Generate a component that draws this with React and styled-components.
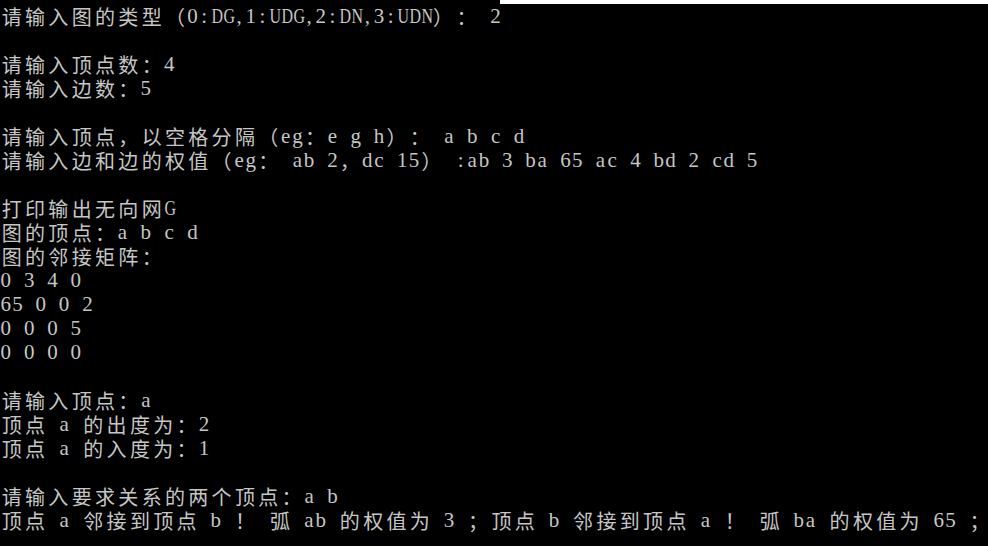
import React from "react";
import styled, { createGlobalStyle } from "styled-components";

const GlobalStyle = createGlobalStyle`
  html, body {
    margin: 0;
    padding: 0;
    background: #000;
  }
  body {
    width: 988px;
    height: 546px;
    overflow: hidden;
  }
`;

const Screen = styled.div`
  width: 988px;
  height: 546px;
  background: #000;
  color: #c6c6c6;
  display: flex;
  flex-direction: column;
`;

const TopStrip = styled.div`
  display: flex;
  height: 4px;
  margin-bottom: 1px;
`;

const StripGap = styled.div`
  width: 500px;
  background: #000;
`;

const StripWhite = styled.div`
  flex: 1;
  background: #fff;
`;

const Line = styled.div`
  display: flex;
  height: 24px;
  line-height: 23px;
  white-space: pre;
`;

// one console cell: CJK / fullwidth chars take two columns
const Cell = styled.span`
  display: inline-block;
  flex: none;
  width: ${(p) => (p.$wide ? "23.333px" : "11.667px")};
  text-align: center;
  font-family: ${(p) =>
    p.$wide
      ? '"Noto Sans CJK SC", sans-serif'
      : '"Liberation Serif", "DejaVu Serif", serif'};
  font-size: ${(p) => (p.$wide ? "20px" : "21px")};
  transform: ${(p) => (p.$cap ? "scaleX(0.76)" : "none")};
`;

const output = [
  "请输入图的类型（0:DG,1:UDG,2:DN,3:UDN）： 2",
  "",
  "请输入顶点数：4",
  "请输入边数：5",
  "",
  "请输入顶点，以空格分隔（eg：e g h）： a b c d",
  "请输入边和边的权值（eg： ab 2，dc 15） :ab 3 ba 65 ac 4 bd 2 cd 5",
  "",
  "打印输出无向网G",
  "图的顶点：a b c d",
  "图的邻接矩阵：",
  "0 3 4 0",
  "65 0 0 2",
  "0 0 0 5",
  "0 0 0 0",
  "",
  "请输入顶点：a",
  "顶点 a 的出度为：2",
  "顶点 a 的入度为：1",
  "",
  "请输入要求关系的两个顶点：a b",
  "顶点 a 邻接到顶点 b ！ 弧 ab 的权值为 3 ；顶点 b 邻接到顶点 a ！ 弧 ba 的权值为 65 ；",
];

const isWide = (ch) => ch.charCodeAt(0) >= 0x2e80;
const isCap = (ch) => /[A-Z]/.test(ch);

function ConsoleLine({ text }) {
  return (
    <Line>
      {[...text].map((ch, i) => (
        <Cell key={i} $wide={isWide(ch)} $cap={isCap(ch)}>
          {ch}
        </Cell>
      ))}
    </Line>
  );
}

export default function App() {
  return (
    <>
      <GlobalStyle />
      <Screen>
        <TopStrip>
          <StripGap />
          <StripWhite />
        </TopStrip>
        {output.map((text, i) => (
          <ConsoleLine key={i} text={text} />
        ))}
      </Screen>
    </>
  );
}
